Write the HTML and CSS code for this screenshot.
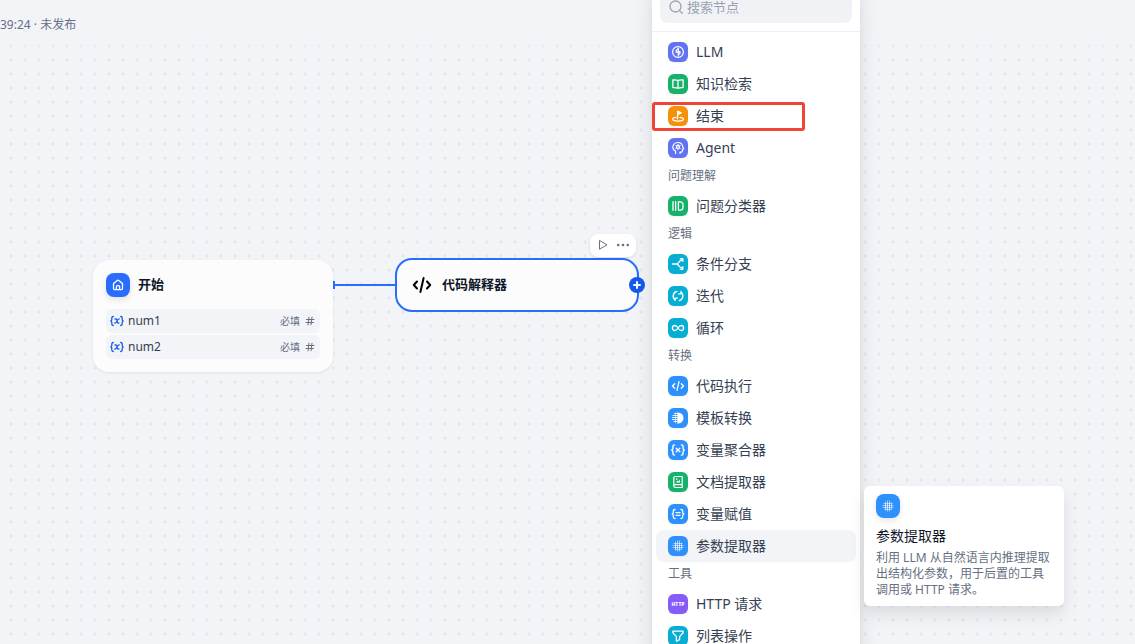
FILE: index.html
```
<!DOCTYPE html>
<html lang="zh-CN">
<head>
	<meta charset="utf-8">
	<title>工作流</title>
	<link rel="stylesheet" href="styles.css">
</head>
<body>

	<svg class="sprite" aria-hidden="true">
		<symbol id="i-llm" viewBox="0 0 14 14"><circle cx="7" cy="7" r="5.400" stroke-width="1.200"/><path d="M7.300 3.400v7.400M7.300 3.400 5.200 5.600v1.600h2.100M7.300 6.600h1.600v2l-1.600 1.200" stroke-width="1.200"/></symbol>
		<symbol id="i-book" viewBox="0 0 14 14"><path d="M7 3.600C6 2.800 4.500 2.700 1.900 2.800v7.800c2.600-.1 4.100 0 5.100.7 1-.7 2.500-.8 5.100-.7V2.800C9.500 2.700 8 2.800 7 3.600zM7 3.600v7.500" stroke-width="1.300"/></symbol>
		<symbol id="i-end" viewBox="0 0 14 14"><path d="M6.600 9.800V2.200l3.700 1.700-3.700 1.800" stroke-width="1.200"/><path d="M7.200 2.700v2.400l2-1.200z" fill="currentColor"/><path d="M5 8.300c-2 .2-3.500.9-3.500 1.800 0 1.200 2.500 2 5.500 2s5.500-.8 5.500-2c0-.9-1.500-1.600-3.500-1.800" stroke-width="1.200"/></symbol>
		<symbol id="i-agent" viewBox="0 0 14 14"><path d="M4.600 12.400v-2.300C2.600 9.200 1.800 8 1.800 6.300a4.900 4.900 0 0 1 5-4.800c2.900 0 4.700 1.800 4.900 4.300l.9 2.100-1.200.6v1.600c0 .7-.5 1.100-1.200 1.100H9v1.200" stroke-width="1.200"/><circle cx="7" cy="6" r="1.500" stroke-width="1.300"/><path d="M7 3.400v.8M7 7.800v.8M4.800 4.700l.7.400M8.500 6.900l.7.400M4.800 7.300l.7-.4M8.500 5.100l.7-.4"/></symbol>
		<symbol id="i-classify" viewBox="0 0 14 14"><path d="M2 2.700v8.600M4.600 2.700v8.600M7.400 2.900v8.200h1.700c1.900 0 2.900-1 2.900-2.900V5.800c0-1.900-1-2.900-2.900-2.900z" stroke-width="1.300"/></symbol>
		<symbol id="i-branch" viewBox="0 0 14 14"><path d="M1.500 7h4c2.400 0 2.500-4 5.600-4M5.500 7c2.400 0 2.500 4 5.600 4M9.300 1.700h2.500v2.600M9.300 12.300h2.500V9.700" stroke-width="1.300"/></symbol>
		<symbol id="i-iterate" viewBox="0 0 14 14"><path d="M5.800 2.300A4.900 4.900 0 0 0 4.200 11M8.200 11.700A4.900 4.900 0 0 0 9.800 3M7.600 4.800H10V2.400M6.400 9.200H4v2.400" stroke-width="1.300"/></symbol>
		<symbol id="i-loop" viewBox="0 0 14 14"><path d="M7 7C6 5.300 5 4.500 3.900 4.500a2.500 2.500 0 0 0 0 5C5 9.500 6 8.700 7 7s2-2.500 3.100-2.500a2.500 2.500 0 0 1 0 5C9 9.500 8 8.700 7 7z" stroke-width="1.300"/></symbol>
		<symbol id="i-code" viewBox="0 0 14 14"><path d="M3.700 4.800 1.500 7l2.200 2.200M10.300 4.800 12.500 7l-2.200 2.200M8 2.700 6 11.300" stroke-width="1.300"/></symbol>
		<symbol id="i-template" viewBox="0 0 14 14"><path d="M7 1.500a5.500 5.500 0 0 1 0 11z" fill="currentColor" stroke="none"/><path d="M1.500 4.500H7M1 6.500h6M1 8.500h6M2.500 10.500H7M3 2.500h4" stroke-width=".9" stroke-linecap="butt"/><path d="M4.500 2v10M6.500 1.500v11" stroke-width=".8" opacity=".7"/></symbol>
		<symbol id="i-var" viewBox="0 0 14 14"><path d="M3.600 1.900c-1.300 0-1.700.6-1.700 1.700v1.600c0 1-.4 1.500-1.200 1.800.8.300 1.200.8 1.200 1.800v1.600c0 1.100.4 1.700 1.700 1.700M10.400 1.900c1.300 0 1.700.6 1.700 1.700v1.600c0 1 .4 1.500 1.200 1.800-.8.300-1.200.8-1.200 1.800v1.600c0 1.100-.4 1.700-1.700 1.700M5.200 5.200l3.600 3.600M8.800 5.200 5.200 8.800" stroke-width="1.400"/></symbol>
		<symbol id="i-doc" viewBox="0 0 14 14"><path d="M2.800 11V3c0-1 .5-1.500 1.500-1.500h6.900v11H4.300c-1 0-1.500-.6-1.500-1.500s.5-1.400 1.500-1.400h6.900" stroke-width="1.200"/><path d="M5 7.400 6.500 5.600l1 1 1.500-2v2.800z" fill="currentColor" stroke="none"/><circle cx="5.700" cy="4.100" r=".8" fill="currentColor" stroke="none"/></symbol>
		<symbol id="i-assign" viewBox="0 0 14 14"><path d="M4 2.500c-1.300 0-1.700.5-1.700 1.500v1.400c0 .9-.4 1.300-1.100 1.600.7.300 1.100.7 1.100 1.600V10c0 1 .4 1.500 1.700 1.500M10 2.500c1.300 0 1.700.5 1.700 1.500v1.400c0 .9.400 1.300 1.100 1.600-.7.300-1.100.7-1.100 1.600V10c0 1-.4 1.500-1.700 1.500M5 5.700h4M5 8.300h4" stroke-width="1.300"/></symbol>
		<symbol id="i-param" viewBox="0 0 14 14"><path d="M4.500 2.500v9M6.500 1.500v11M8.500 1.500v11M10.500 3.500v7M2.500 4.500h9M1.500 6.500h11M1.500 8.500h11M3.500 10.500h7" stroke-width=".9" stroke-linecap="butt" opacity=".6"/><path d="M4.500 5v5M6.500 3.500v7M8.500 3.500v7M4 6.500h6.500M4 8.500h6.500" stroke-width=".8" stroke-linecap="butt" stroke-dasharray="1 1" opacity=".7"/></symbol>
		<symbol id="i-filter" viewBox="0 0 14 14"><path d="M1.900 2.200h10.200v1.600L8.600 7.600v3L5.400 12.300V7.600L1.900 3.800z" stroke-width="1.300"/></symbol>
		<symbol id="i-home" viewBox="0 0 14 14"><path d="M2.500 6.200c0-.6.200-1 .7-1.300l3-2.400c.6-.4 1-.4 1.600 0l3 2.400c.5.300.7.700.7 1.300v4.100c0 .9-.5 1.300-1.300 1.300H3.800c-.8 0-1.300-.4-1.300-1.300zM5.400 11.600V8.700c0-.7.300-1 1-1h1.200c.7 0 1 .3 1 1v2.900" stroke-width="1.300"/></symbol>
		<symbol id="i-x" viewBox="0 0 14 14"><path d="M3.300 2.500c-1.100 0-1.500.5-1.500 1.400v1.600C1.800 6.300 1.400 6.700.8 7c.6.3 1 .7 1 1.500v1.600c0 .9.400 1.400 1.500 1.400M10.700 2.500c1.100 0 1.500.5 1.500 1.400v1.600c0 .8.400 1.200 1 1.500-.6.300-1 .7-1 1.500v1.600c0 .9-.4 1.400-1.500 1.400M5 5c1.500-.4 1.800.3 2.100 2s.7 2.400 1.900 2M9.200 4.900C8.100 4.700 7.600 6 7 7s-1.100 2.300-2.300 2.100" stroke-width="1.300"/></symbol>
	</svg>

	<main class="canvas">
		<header class="status">39:24 · 未发布</header>

		<section class="node node-start">
			<div class="node-head">
				<span class="icon icon-lg primary"><svg><use href="#i-home"/></svg></span>
				<h2>开始</h2>
			</div>
			<ul class="vars">
				<li><svg class="x"><use href="#i-x"/></svg><span class="name">num1</span><span class="req">必填</span><svg class="hash" viewBox="0 0 10 10"><path d="M1.500 3.500H9M1 6.500h7.500M4 1.200l-1 7.600M7 1.200l-1 7.600"/></svg></li>
				<li><svg class="x"><use href="#i-x"/></svg><span class="name">num2</span><span class="req">必填</span><svg class="hash" viewBox="0 0 10 10"><path d="M1.500 3.500H9M1 6.500h7.500M4 1.200l-1 7.600M7 1.200l-1 7.600"/></svg></li>
			</ul>
		</section>

		<svg class="edge" viewBox="0 0 64 8"><path d="M0 0h2v8H0zM2 3h62v2H2z"/></svg>

		<section class="node node-code">
			<svg class="code" viewBox="0 0 20 20"><path d="M5 6.500 1.800 10 5 13.500M15 6.500l3.200 3.500-3.200 3.500M11.600 3 8.400 17"/></svg>
			<h2>代码解释器</h2>
			<button class="add" aria-label="添加节点"><svg viewBox="0 0 16 16"><path d="M8 5v6M5 8h6"/></svg></button>
		</section>

		<div class="toolbar">
			<button aria-label="运行"><svg viewBox="0 0 12 12"><path d="M2.500 1.800v8.400L9.700 6z"/></svg></button>
			<button aria-label="更多"><svg class="more" viewBox="0 0 14 12"><circle cx="2.200" cy="6" r="1.300"/><circle cx="7" cy="6" r="1.300"/><circle cx="11.800" cy="6" r="1.300"/></svg></button>
		</div>

		<aside class="menu">
			<div class="search-wrap">
				<label class="search">
					<svg viewBox="0 0 16 16"><circle cx="7.500" cy="7.500" r="5.500"/><path d="m11.600 11.600 2.600 2.600"/></svg>
					<input type="text" placeholder="搜索节点" aria-label="搜索节点">
				</label>
			</div>
			<div class="list">
				<button class="item"><span class="icon indigo"><svg><use href="#i-llm"/></svg></span><span class="label">LLM</span></button>
				<button class="item"><span class="icon green"><svg><use href="#i-book"/></svg></span><span class="label">知识检索</span></button>
				<button class="item marked"><span class="icon orange"><svg><use href="#i-end"/></svg></span><span class="label">结束</span></button>
				<button class="item"><span class="icon indigo"><svg><use href="#i-agent"/></svg></span><span class="label">Agent</span></button>
				<h3>问题理解</h3>
				<button class="item"><span class="icon green"><svg><use href="#i-classify"/></svg></span><span class="label">问题分类器</span></button>
				<h3>逻辑</h3>
				<button class="item"><span class="icon cyan"><svg><use href="#i-branch"/></svg></span><span class="label">条件分支</span></button>
				<button class="item"><span class="icon cyan"><svg><use href="#i-iterate"/></svg></span><span class="label">迭代</span></button>
				<button class="item"><span class="icon cyan"><svg><use href="#i-loop"/></svg></span><span class="label">循环</span></button>
				<h3>转换</h3>
				<button class="item"><span class="icon blue"><svg><use href="#i-code"/></svg></span><span class="label">代码执行</span></button>
				<button class="item"><span class="icon blue"><svg><use href="#i-template"/></svg></span><span class="label">模板转换</span></button>
				<button class="item"><span class="icon blue"><svg><use href="#i-var"/></svg></span><span class="label">变量聚合器</span></button>
				<button class="item"><span class="icon green"><svg><use href="#i-doc"/></svg></span><span class="label">文档提取器</span></button>
				<button class="item"><span class="icon blue"><svg><use href="#i-assign"/></svg></span><span class="label">变量赋值</span></button>
				<button class="item active"><span class="icon blue"><svg><use href="#i-param"/></svg></span><span class="label">参数提取器</span></button>
				<h3>工具</h3>
				<button class="item"><span class="icon violet http">HTTP</span><span class="label">HTTP 请求</span></button>
				<button class="item"><span class="icon cyan"><svg><use href="#i-filter"/></svg></span><span class="label">列表操作</span></button>
			</div>
		</aside>

		<div class="tip" role="tooltip">
			<span class="icon icon-lg blue"><svg><use href="#i-param"/></svg></span>
			<h4>参数提取器</h4>
			<p>利用 LLM 从自然语言内推理提取出结构化参数，用于后置的工具调用或 HTTP 请求。</p>
		</div>
	</main>

</body>
</html>
```
FILE: styles.css
```
*, *::after{
	box-sizing: border-box;
}
body{
	margin: 0;
	overflow: hidden;
	font-family: "Noto Sans", "Noto Sans CJK SC", sans-serif;
	font-size: 14px;
	color: #354052;
}
h2, h3, h4, p, ul{
	margin: 0;
	padding: 0;
}
button{
	border: 0;
	padding: 0;
	background: none;
	font: inherit;
	color: inherit;
	cursor: pointer;
}
svg{
	display: block;
	fill: none;
	stroke: currentColor;
	stroke-linecap: round;
	stroke-linejoin: round;
}
.sprite{
	display: none;
}

/* canvas */
.canvas{
	position: relative;
	height: 100vh;
	overflow: hidden;
	background-color: #f2f4f8;
	background-image: radial-gradient(circle, #e3e6eb 1px, transparent 2px);
	background-size: 14px 14px;
	background-position: 4px -3px;
}
.status{
	height: 56px;
	padding-top: 17px;
	font-size: 12px;
	line-height: 16px;
	color: #676f83;
	background: linear-gradient(#f2f4f8 30%, rgba(242,244,248,0));
}

/* coloured squares */
.icon{
	display: flex;
	flex: none;
	align-items: center;
	justify-content: center;
	width: 20px;
	height: 20px;
	border-radius: 6px;
	color: #fff;
	box-shadow: 0 1px 2px rgba(9,9,11,.06);
}
.icon svg{
	width: 14px;
	height: 14px;
}
.icon-lg{
	width: 24px;
	height: 24px;
	border-radius: 8px;
	box-shadow: 0 3px 6px rgba(9,9,11,.1);
}
.primary{ background: #296dff; }
.indigo{ background: #6172f3; }
.green{ background: #17b26a; }
.orange{ background: #f79009; }
.cyan{ background: #06aed4; }
.blue{ background: #2e90fa; }
.violet{ background: #875bf7; }
.http{
	font-size: 5px;
	font-weight: 800;
}

/* nodes */
.node{
	position: absolute;
	background: #fcfcfd;
}
.node h2{
	padding-bottom: 2px;
	font-size: 13px;
	line-height: 16px;
	font-weight: 600;
	color: #101828;
}
.node-start{
	left: 93px;
	top: 260px;
	width: 240px;
	padding: 13px;
	border-radius: 16px;
	box-shadow: 0 1px 3px rgba(9,9,11,.08);
}
.node-head{
	display: flex;
	align-items: center;
	gap: 8px;
	margin-bottom: 12px;
}
.vars{
	display: flex;
	flex-direction: column;
	gap: 2px;
	list-style: none;
}
.vars li{
	display: flex;
	align-items: center;
	gap: 4px;
	height: 24px;
	padding: 0 5px 0 4px;
	border-radius: 6px;
	background: #f2f4f7;
	font-size: 12px;
}
.vars .x{
	width: 14px;
	height: 14px;
	color: #155aef;
}
.vars .name{
	flex: 1;
	padding-bottom: 2px;
}
.vars .req{
	padding-bottom: 2px;
	font-size: 10px;
	color: #676f83;
}
.vars .hash{
	width: 10px;
	height: 10px;
	margin-left: 1px;
	color: #676f83;
}
.edge{
	position: absolute;
	left: 333px;
	top: 281px;
	width: 64px;
	height: 8px;
	fill: #296dff;
	stroke: none;
}
.node-code{
	left: 395px;
	top: 258px;
	display: flex;
	align-items: center;
	gap: 10px;
	width: 244px;
	padding: 15px;
	border: 2px solid #296dff;
	border-radius: 17px;
}
.code{
	width: 20px;
	height: 20px;
	color: #000;
	stroke-width: 2;
}
.add{
	position: absolute;
	right: -8px;
	top: 17px;
	width: 16px;
	height: 16px;
	border-radius: 50%;
	background: #155aef;
	color: #fff;
}
.add svg{
	stroke-width: 2;
}
.toolbar{
	position: absolute;
	left: 590px;
	top: 234px;
	display: flex;
	align-items: center;
	gap: 7px;
	height: 23px;
	padding: 0 6px 1px 7px;
	border-radius: 8px;
	background: #fff;
	color: #676f83;
	box-shadow: 0 1px 3px rgba(9,9,11,.12);
}
.toolbar svg{
	width: 12px;
	height: 12px;
}
.toolbar .more{
	width: 14px;
	fill: currentColor;
	stroke: none;
}

/* block selector, scrolled a little past its top */
.menu{
	position: absolute;
	left: 652px;
	top: -17px;
	width: 208px;
	background: #fff;
	box-shadow: 0 12px 20px rgba(9,9,11,.1), 0 0 6px rgba(9,9,11,.04);
}
.search-wrap{
	padding: 8px;
	border-bottom: 1px solid #eceef2;
}
.search{
	display: flex;
	align-items: center;
	gap: 3px;
	height: 32px;
	padding: 0 8px;
	border-radius: 8px;
	background: #f0f2f6;
	color: #98a2b2;
}
.search svg{
	flex: none;
	width: 16px;
	height: 16px;
	stroke-width: 1.3;
}
.search input{
	width: 100%;
	min-width: 0;
	padding: 0;
	border: 0;
	outline: 0;
	background: none;
	font: inherit;
	font-size: 13px;
}
.search input::placeholder{
	color: #98a2b2;
}
.list{
	padding: 4px;
}
.item{
	display: flex;
	align-items: center;
	gap: 8px;
	width: 100%;
	height: 32px;
	padding: 0 12px;
	border-radius: 8px;
	text-align: left;
}
.label{
	line-height: 16px;
}
.item.active{
	background: #f2f4f7;
}
.marked{
	position: relative;
}
.marked::after{
	content: "";
	position: absolute;
	left: -4px;
	top: 2px;
	width: 153px;
	height: 29px;
	border: 3px solid #f04438;
	border-radius: 3px;
}
.list h3{
	margin-bottom: 2px;
	padding: 0 12px;
	font-size: 12px;
	line-height: 24px;
	font-weight: 400;
	color: #676f83;
}
.tip{
	position: absolute;
	left: 864px;
	top: 486px;
	width: 200px;
	padding: 8px 12px;
	border-radius: 6px;
	background: #fff;
	box-shadow: 0 8px 16px rgba(9,9,11,.1);
}
.tip h4{
	margin: 8px 0 4px;
	font-size: 14px;
	line-height: 20px;
	font-weight: 400;
	color: #101828;
}
.tip p{
	font-size: 12px;
	line-height: 16px;
	color: #676f83;
}
```
